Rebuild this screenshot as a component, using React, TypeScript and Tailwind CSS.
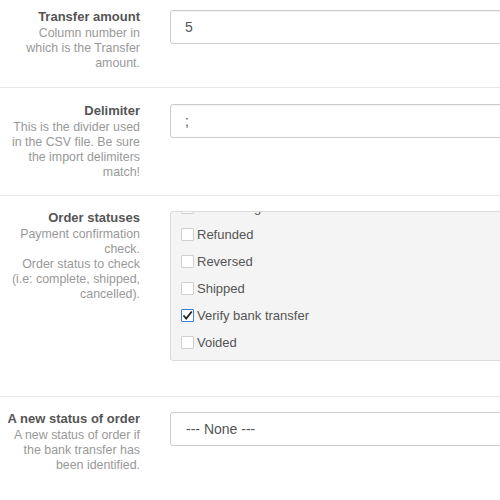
const statuses = [
  { label: 'Processing', checked: false },
  { label: 'Refunded', checked: false },
  { label: 'Reversed', checked: false },
  { label: 'Shipped', checked: false },
  { label: 'Verify bank transfer', checked: true },
  { label: 'Voided', checked: false },
]

function Label({ title, lines }: { title: string; lines: string[] }) {
  return (
    <div className="w-[140px] shrink-0 text-right">
      <div className="text-[13px] leading-[18px] font-bold text-[#555]">{title}</div>
      {lines.map((l) => (
        <div key={l} className="text-[12.4px] leading-[15px] text-[#999] whitespace-nowrap">{l}</div>
      ))}
    </div>
  )
}

function Field({ value }: { value: string }) {
  return (
    <div className="mt-[2px] w-[400px] h-[34px] shrink-0 flex items-center pl-[14px] border border-[#ccc] rounded-[3px] bg-white text-[14px] text-[#555] shadow-[inset_0_1px_1px_rgba(0,0,0,0.05)]">
      {value}
    </div>
  )
}

function Box({ checked }: { checked: boolean }) {
  if (checked) {
    return (
      <span className="w-[13px] h-[13px] shrink-0 border border-[#3d7fcf] rounded-[1px] bg-white flex items-center justify-center">
        <svg width="11" height="11" viewBox="0 0 11 11">
          <path d="M1.5 5.5 L4.2 8.5 L9.8 1.5" fill="none" stroke="#222" strokeWidth="1.8" />
        </svg>
      </span>
    )
  }
  return <span className="w-[13px] h-[13px] shrink-0 border border-[#d0d0d0] rounded-[1px] bg-white" />
}

export default function App() {
  return (
    <div className="w-[500px] h-[500px] overflow-hidden bg-white" style={{ fontFamily: '"Liberation Sans", Arial, sans-serif' }}>
      <div className="h-[88px] pt-[8px] flex gap-[30px] border-b border-[#e8e8e8]">
        <Label title="Transfer amount" lines={['Column number in', 'which is the Transfer', 'amount.']} />
        <Field value="5" />
      </div>
      <div className="h-[108px] pt-[14px] flex gap-[30px] border-b border-[#e8e8e8]">
        <Label title="Delimiter" lines={['This is the divider used', 'in the CSV file. Be sure', 'the import delimiters', 'match!']} />
        <Field value=";" />
      </div>
      <div className="h-[201px] pt-[13px] flex gap-[30px] border-b border-[#e8e8e8]">
        <Label
          title="Order statuses"
          lines={['Payment confirmation', 'check.', 'Order status to check', '(i.e: complete, shipped,', 'cancelled).']}
        />
        <div className="mt-[2px] w-[400px] h-[150px] shrink-0 overflow-hidden border border-[#dcdcdc] rounded-[3px] bg-[#f4f4f4] pl-[10px]">
          <div className="-mt-[18px]">
            {statuses.map((s) => (
              <div key={s.label} className="h-[27px] flex items-center gap-[3px] text-[13px] text-[#555]">
                <Box checked={s.checked} />
                <span>{s.label}</span>
              </div>
            ))}
          </div>
        </div>
      </div>
      <div className="pt-[13px] flex gap-[30px]">
        <Label title="A new status of order" lines={['A new status of order if', 'the bank transfer has', 'been identified.']} />
        <div className="mt-[2px] w-[400px] h-[34px] shrink-0 flex items-center pl-[15px] border border-[#ccc] rounded-[3px] bg-white text-[14px] text-[#555]">
          --- None ---
        </div>
      </div>
    </div>
  )
}
